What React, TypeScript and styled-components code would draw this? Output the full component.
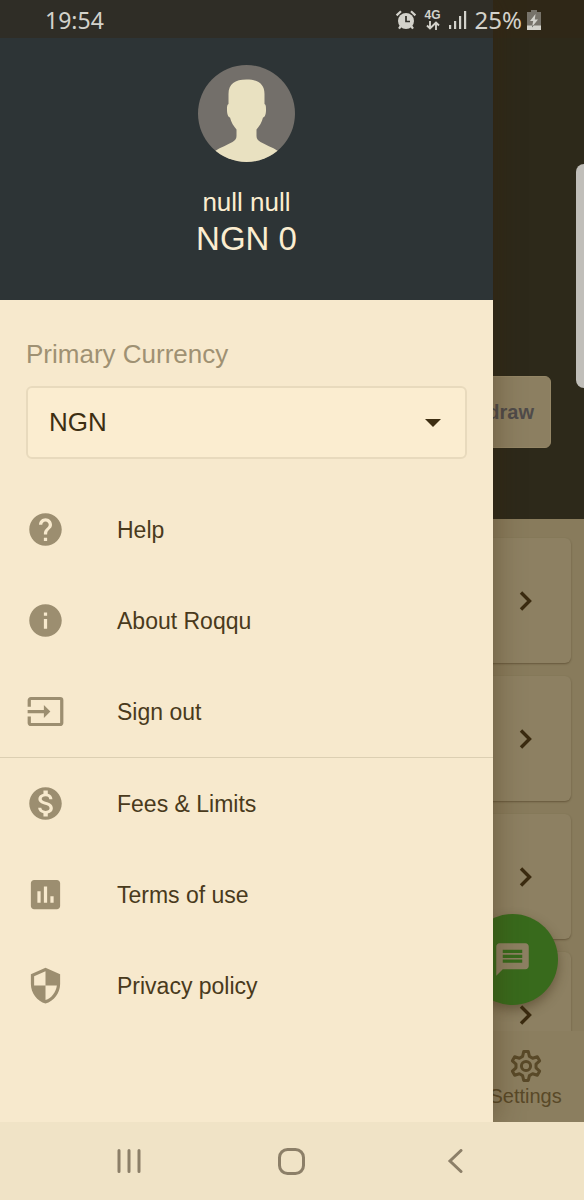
import React from 'react';
import styled, { createGlobalStyle } from 'styled-components';
import {
  MdAssessment,
  MdHelp,
  MdInfo,
  MdInput,
  MdMessage,
  MdMonetizationOn,
  MdSecurity,
} from 'react-icons/md';

const sans = '"Liberation Sans", Arial, sans-serif';
const systemFont = '"Noto Sans", "Open Sans", sans-serif';

const GlobalStyle = createGlobalStyle`
  *, *::before, *::after { box-sizing: border-box; }
  body { margin: 0; font-family: ${sans}; background: #f0e3c6; }
  button, select { font: inherit; color: inherit; }
  svg { display: block; flex-shrink: 0; }
`;

const Screen = styled.div`
  position: relative;
  display: flex;
  flex-direction: column;
  height: 100vh;
  overflow: hidden;
`;

const StatusBar = styled.header`
  position: absolute;
  inset: 0 0 auto;
  z-index: 3;
  display: flex;
  align-items: center;
  justify-content: space-between;
  height: 38px;
  padding: 2px 43px 0 45px;
  background: rgba(50, 37, 19, 0.45);
  color: #d3d2cb;
  font-family: ${systemFont};
  font-size: 23px;
  line-height: 36px;
`;

const StatusIcons = styled.div`
  display: flex;
  align-items: center;
  gap: 8px;
`;

const Network = styled.div`
  display: flex;
  flex-direction: column;
  align-items: center;
  font: bold 12px/11px ${sans};
`;

const BatteryLevel = styled.div`
  display: flex;
  align-items: center;
  gap: 5px;
  font-size: 24px;
`;

const Main = styled.div`
  flex: 1;
  min-height: 0;
  display: grid;
  grid-template: minmax(0, 1fr) / minmax(0, 1fr);
`;

const Wallet = styled.main`
  position: relative;
  grid-area: 1 / 1;
  display: flex;
  flex-direction: column;
  min-height: 0;
  background: #887b5c;
`;

const Hero = styled.section`
  display: flex;
  flex-shrink: 0;
  align-items: flex-end;
  justify-content: flex-end;
  height: 519px;
  padding: 0 33px 71px;
  background: #2d291a;
`;

const WithdrawButton = styled.button`
  height: 72px;
  padding: 0 16px;
  border: 1px solid #948666;
  border-radius: 6px;
  background: #8c7f61;
  color: #4f4b4a;
  font-size: 20px;
  font-weight: bold;
`;

const WalletList = styled.div`
  flex: 1;
  min-height: 0;
  display: flex;
  flex-direction: column;
  gap: 13px;
  padding: 19px 13px 0;
  overflow: hidden;
`;

const WalletCard = styled.button`
  display: flex;
  flex-shrink: 0;
  align-items: center;
  justify-content: flex-end;
  height: 125px;
  padding: 0 38px;
  border: 0;
  border-radius: 6px;
  background: #8d8062;
  box-shadow: 0 1px 2px rgba(60, 45, 20, 0.45);
`;

const Tabs = styled.nav`
  display: flex;
  flex-shrink: 0;
  justify-content: flex-end;
  height: 91px;
  background: #8b7e5f;
`;

const Tab = styled.button`
  display: flex;
  flex-direction: column;
  align-items: center;
  gap: 3px;
  width: 20%;
  padding: 19px 0 0;
  border: 0;
  background: none;
  color: #594928;
  font-size: 20px;
  line-height: 22px;
`;

const ChatButton = styled.button`
  position: absolute;
  right: 26px;
  bottom: 117px;
  display: grid;
  place-items: center;
  width: 91px;
  height: 91px;
  padding: 0;
  border: 0;
  border-radius: 50%;
  background: #386a1c;
  color: #8d8062;
  box-shadow: 0 5px 12px rgba(60, 45, 20, 0.45);
`;

const EdgeHandle = styled.div`
  position: absolute;
  top: 164px;
  right: 0;
  z-index: 3;
  width: 8px;
  height: 224px;
  border-radius: 8px 0 0 8px;
  background: #c0beb9;
`;

const Drawer = styled.aside`
  grid-area: 1 / 1;
  z-index: 2;
  display: flex;
  flex-direction: column;
  width: calc(100% - 91px);
  min-height: 0;
  background: #f7e9cd;
  box-shadow: 0 0 30px rgba(60, 35, 8, 0.4);
`;

const Profile = styled.section`
  display: flex;
  flex-direction: column;
  flex-shrink: 0;
  align-items: center;
  padding: 65px 0 42px;
  background: #2d3436;
  color: #fbedd0;
`;

const Name = styled.div`
  margin-top: 22px;
  font-size: 26px;
  line-height: 34px;
`;

const Balance = styled.div`
  font-size: 33px;
  line-height: 39px;
`;

const CurrencyField = styled.div`
  display: flex;
  flex-direction: column;
  gap: 17px;
  padding: 39px 26px 25px;
`;

const FieldLabel = styled.label`
  color: #9f9173;
  font-size: 26px;
  line-height: 30px;
`;

const SelectBox = styled.div`
  display: grid;
  align-items: center;

  > * { grid-area: 1 / 1; }

  > svg {
    justify-self: end;
    margin-right: 26px;
    pointer-events: none;
  }
`;

const Select = styled.select`
  width: 100%;
  height: 73px;
  padding: 0 21px 2px;
  border: 2px solid #e8dabd;
  border-radius: 6px;
  background: #fbedd0;
  color: #3d2e12;
  font-size: 26px;
  appearance: none;
`;

const Menu = styled.nav`
  display: flex;
  flex-direction: column;
`;

const MenuLink = styled.a`
  display: flex;
  align-items: center;
  gap: 52px;
  height: 91px;
  padding: 0 26px;
  color: #493a1c;
  font-size: 23px;
  line-height: 28px;
  text-decoration: none;

  svg { color: #9c8e70; }
`;

const Divider = styled.hr`
  width: 100%;
  height: 1px;
  margin: 0;
  border: 0;
  background: #dccfb2;
`;

const SystemNav = styled.footer`
  z-index: 3;
  display: grid;
  flex-shrink: 0;
  grid-template-columns: repeat(3, 1fr);
  height: 78px;
  padding: 0 47px;
  background: #f0e3c6;
`;

const SystemButton = styled.button`
  display: grid;
  place-items: center;
  padding: 0;
  border: 0;
  background: none;
  color: #8c7f68;
`;

const AlarmIcon = () => (
  <svg width="22" height="20" viewBox="0 0 22 20" aria-hidden="true">
    <circle cx="11" cy="11" r="8" fill="currentColor" />
    <path d="M1.6 5.4 6 1.300M20.4 5.400 16 1.300" stroke="currentColor" strokeWidth="2.200" />
    <path d="M5.800 16 4 18.600M16.200 16 18 18.600" stroke="currentColor" strokeWidth="2.200" />
    <path d="M11 6v5.500h4" stroke="#2f2e28" strokeWidth="1.700" fill="none" />
  </svg>
);

const DataArrows = () => (
  <svg width="14" height="9" viewBox="0 0 14 9" aria-hidden="true">
    <path
      d="M4 0v7M1 4.500l3 3 3-3M10 9V2M7 4.500l3-3 3 3"
      fill="none"
      stroke="currentColor"
      strokeWidth="1.900"
    />
  </svg>
);

const SignalIcon = () => (
  <svg width="18" height="20" viewBox="0 0 18 20" fill="currentColor" aria-hidden="true">
    <rect x="0" y="15" width="2.200" height="4" />
    <rect x="5" y="11" width="2.200" height="8" />
    <rect x="10" y="6" width="2.200" height="13" />
    <rect x="15" y="1" width="2.200" height="18" />
  </svg>
);

const BatteryIcon = () => (
  <svg width="14" height="20" viewBox="0 0 14 20" aria-hidden="true">
    <path d="M4 0h6v2h4v18H0V2h4z" fill="#77736a" />
    <path d="M0 15.500h14V20H0z" fill="currentColor" />
    <path d="M8.500 4 3 11h3.200L5 17l6-7.500H7.800z" fill="currentColor" />
    <path d="M6.600 15.500 5 17.400l.4-1.900z" fill="#2f2e28" />
  </svg>
);

const Avatar = () => (
  <svg width="98" height="98" viewBox="0 0 98 98" role="img" aria-label="Profile photo">
    <clipPath id="avatar-circle">
      <circle cx="48.500" cy="48.500" r="48.500" />
    </clipPath>
    <g clipPath="url(#avatar-circle)">
      <rect width="98" height="98" fill="#736f6a" />
      <path
        fill="#e9e1c1"
        d="M30.500 39V29C30.500 19 37 14.500 48.500 14.500S66.500 19 66.500 29V39C68 39.500 68 42 68 45C68 49 67 52 65 52.500C64 57 61.500 61 58.500 64.500V71C58.500 74 60 75.500 62.500 77C67.500 80 74 82 80 86V98H17V86C23 82 29.500 80 34.500 77C37 75.500 38.500 74 38.500 71V64.500C35.500 61 33 57 32 52.500C30 52 29 49 29 45C29 42 29 39.500 30.500 39Z"
      />
    </g>
  </svg>
);

const Chevron = () => (
  <svg width="14" height="20" viewBox="0 0 14 20" aria-hidden="true">
    <path d="M2 1.500 10.500 10 2 18.500" fill="none" stroke="#3b2b10" strokeWidth="3.400" />
  </svg>
);

const GearIcon = () => {
  const tooth = [[-3.4, -9.6], [-2.3, -14.4], [2.3, -14.4], [3.4, -9.6]];
  const points = [0, 1, 2, 3, 4, 5].flatMap((turn) => {
    const angle = (turn * Math.PI) / 3;
    const cos = Math.cos(angle);
    const sin = Math.sin(angle);
    return tooth.map(([x, y]) => `${x * cos - y * sin},${x * sin + y * cos}`);
  });
  return (
    <svg
      width="32"
      height="32"
      viewBox="-16 -16 32 32"
      fill="none"
      stroke="currentColor"
      strokeWidth="3"
      strokeLinejoin="round"
      aria-hidden="true"
    >
      <polygon points={points.join(' ')} />
      <circle r="4.600" />
    </svg>
  );
};

const CaretDown = () => (
  <svg width="16" height="8" viewBox="0 0 16 8" aria-hidden="true">
    <path d="M0 0h16L8 8z" fill="#3d2e12" />
  </svg>
);

const RecentsIcon = () => (
  <svg width="24" height="24" viewBox="0 0 24 24" aria-hidden="true">
    <path
      d="M2 1.500v21M12 1.500v21M22 1.500v21"
      stroke="currentColor"
      strokeWidth="3"
      strokeLinecap="round"
    />
  </svg>
);

const HomeIcon = () => (
  <svg width="27" height="27" viewBox="0 0 27 27" aria-hidden="true">
    <rect x="1.500" y="1.500" width="24" height="24" rx="8" fill="none" stroke="currentColor" strokeWidth="3" />
  </svg>
);

const BackIcon = () => (
  <svg width="16" height="24" viewBox="0 0 16 24" aria-hidden="true">
    <path
      d="M14 1.500 3 12l11 10.500"
      fill="none"
      stroke="currentColor"
      strokeWidth="3"
      strokeLinecap="round"
    />
  </svg>
);

const accountLinks = [
  { label: 'Help', Icon: MdHelp },
  { label: 'About Roqqu', Icon: MdInfo },
  { label: 'Sign out', Icon: MdInput },
];

const legalLinks = [
  { label: 'Fees & Limits', Icon: MdMonetizationOn },
  { label: 'Terms of use', Icon: MdAssessment },
  { label: 'Privacy policy', Icon: MdSecurity },
];

const renderLinks = (links: typeof accountLinks) =>
  links.map(({ label, Icon }) => (
    <MenuLink key={label} href="#">
      <Icon size={39} aria-hidden="true" />
      {label}
    </MenuLink>
  ));

export default function App() {
  return (
    <Screen>
      <GlobalStyle />
      <StatusBar>
        <span>19:54</span>
        <StatusIcons>
          <AlarmIcon />
          <Network>
            4G
            <DataArrows />
          </Network>
          <SignalIcon />
          <BatteryLevel>
            25%
            <BatteryIcon />
          </BatteryLevel>
        </StatusIcons>
      </StatusBar>

      <Main>
        <Wallet>
          <Hero>
            <WithdrawButton type="button">Withdraw</WithdrawButton>
          </Hero>
          <WalletList>
            {[1, 2, 3, 4].map((id) => (
              <WalletCard key={id} type="button" aria-label="Open wallet">
                <Chevron />
              </WalletCard>
            ))}
          </WalletList>
          <Tabs>
            <Tab type="button">
              <GearIcon />
              Settings
            </Tab>
          </Tabs>
          <ChatButton type="button" aria-label="Chat">
            <MdMessage size={39} aria-hidden="true" />
          </ChatButton>
        </Wallet>

        <Drawer>
          <Profile>
            <Avatar />
            <Name>null null</Name>
            <Balance>NGN 0</Balance>
          </Profile>
          <CurrencyField>
            <FieldLabel htmlFor="currency">Primary Currency</FieldLabel>
            <SelectBox>
              <Select id="currency" defaultValue="NGN">
                <option value="NGN">NGN</option>
              </Select>
              <CaretDown />
            </SelectBox>
          </CurrencyField>
          <Menu>
            {renderLinks(accountLinks)}
            <Divider />
            {renderLinks(legalLinks)}
          </Menu>
        </Drawer>
      </Main>

      <EdgeHandle />

      <SystemNav>
        <SystemButton type="button" aria-label="Recent apps">
          <RecentsIcon />
        </SystemButton>
        <SystemButton type="button" aria-label="Home">
          <HomeIcon />
        </SystemButton>
        <SystemButton type="button" aria-label="Back">
          <BackIcon />
        </SystemButton>
      </SystemNav>
    </Screen>
  );
}
